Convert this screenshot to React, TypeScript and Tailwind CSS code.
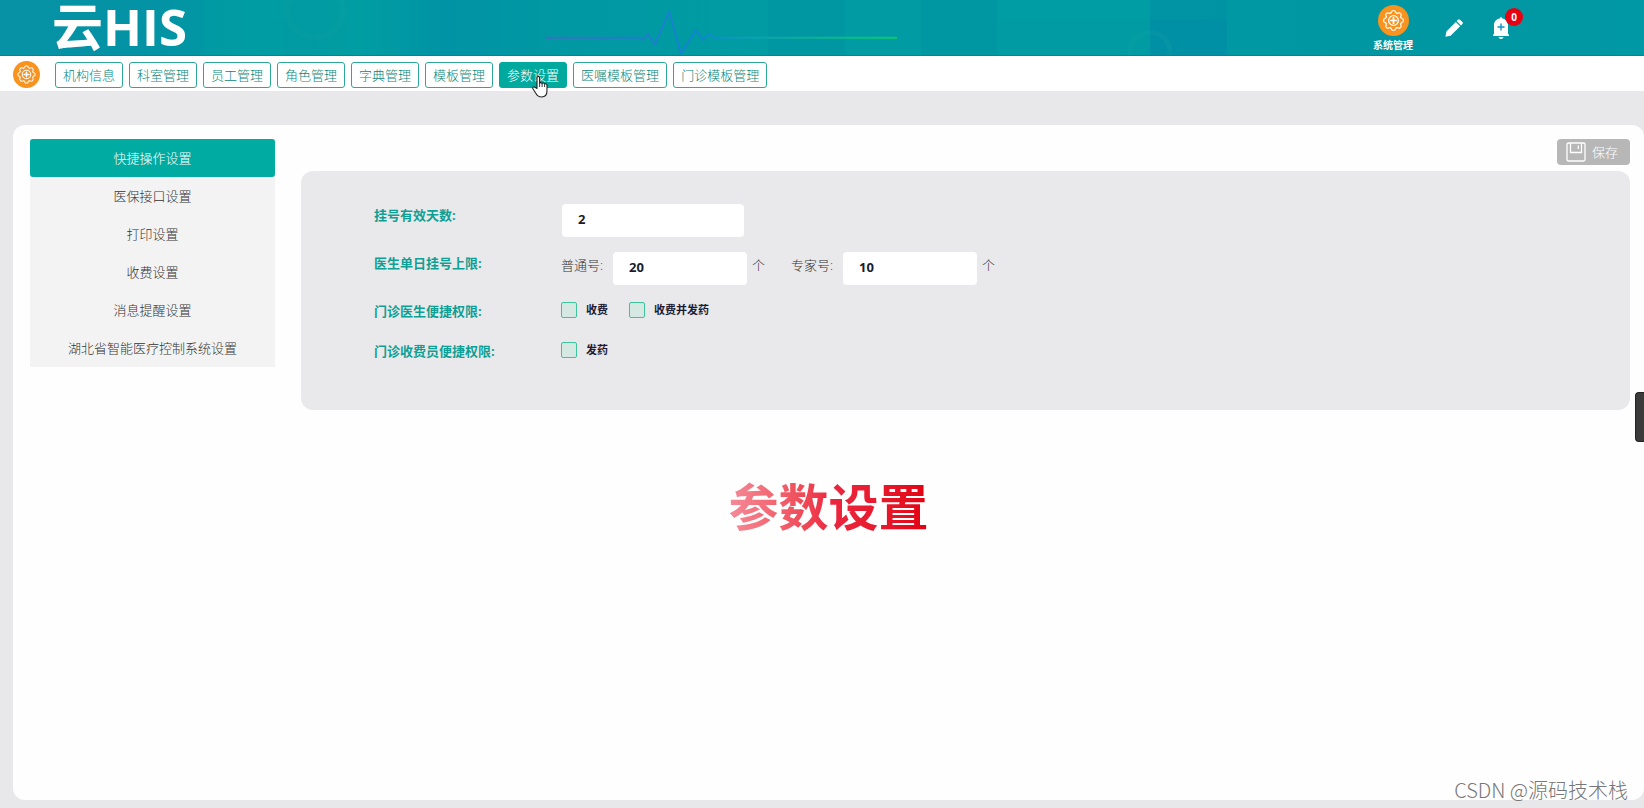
import { useState } from "react";
import type { ReactNode } from "react";

const modules = [
  "机构信息",
  "科室管理",
  "员工管理",
  "角色管理",
  "字典管理",
  "模板管理",
  "参数设置",
  "医嘱模板管理",
  "门诊模板管理",
];

const sections = [
  "快捷操作设置",
  "医保接口设置",
  "打印设置",
  "收费设置",
  "消息提醒设置",
  "湖北省智能医疗控制系统设置",
];

export default function App() {
  const [section, setSection] = useState(sections[0]);

  return (
    <div className="relative flex min-h-screen flex-col bg-[#e8e8ea] font-['Open_Sans','Noto_Sans_CJK_SC',sans-serif] text-[13px] leading-5 font-light text-[#333]">
      <Header />
      <ModuleBar />

      <main className="relative mt-[34px] mb-2 ml-[13px] flex flex-1 items-start gap-[26px] rounded-xl bg-[#fefefe] px-[14px] pt-[14px] pl-[17px]">
        <nav className="w-[245px] shrink-0 bg-[#f3f3f3]">
          {sections.map((name) => (
            <button
              key={name}
              type="button"
              onClick={() => setSection(name)}
              className={
                name === section
                  ? "block h-[38px] w-full rounded-[3px] bg-[#00aca2] text-white"
                  : "block h-[38px] w-full"
              }
            >
              {name}
            </button>
          ))}
        </nav>

        <section className="flex min-w-0 flex-1 flex-col">
          <button
            type="button"
            className="flex h-[26px] items-center gap-[6px] self-end rounded bg-[#b7b7b7] pr-3 pl-[9px] text-white"
          >
            <SaveIcon />
            保存
          </button>
          <QuickSettings />
        </section>

        <h1 className="pointer-events-none absolute inset-x-0 top-[346px] text-center text-[50px] leading-[72px] font-bold">
          <span className="bg-linear-to-r from-[#f48a98] via-[#ec2740] to-[#e2000f] bg-clip-text text-transparent">
            参数设置
          </span>
        </h1>
      </main>

      <div className="absolute top-[392px] right-0 h-[50px] w-[9px] rounded-l-sm border border-r-0 border-[#222] bg-[#3b3b3b]" />
      <p className="pointer-events-none absolute right-4 bottom-1 font-['Noto_Sans_CJK_SC',sans-serif] text-[20px] leading-7 text-[#777]">
        CSDN @源码技术栈
      </p>
    </div>
  );
}

const Header = () => (
  <header className="relative flex h-14 items-center justify-between border-b border-[#0a8389] bg-[#0099a2] pr-[135px] pl-[52px] text-white">
    <HeaderArt />
    <p className="relative pb-1 text-[51px] leading-[52px] font-bold whitespace-nowrap">
      云HIS
    </p>

    <div className="relative flex items-center">
      <a
        href="#system"
        className="flex flex-col items-center gap-px pt-[2px] text-[10px] leading-4 font-bold"
      >
        <GearBadge className="size-[31px]" />
        系统管理
      </a>
      <button type="button" aria-label="编辑" className="ml-8">
        <PencilIcon />
      </button>
      <button type="button" aria-label="消息" className="relative ml-[30px]">
        <BellIcon />
        <span className="absolute -top-[9px] left-3 flex size-[18px] items-center justify-center rounded-full bg-[#e60012] text-[10px] font-bold">
          0
        </span>
      </button>
    </div>
  </header>
);

const ModuleBar = () => (
  <nav className="flex h-[35px] items-center gap-[6px] bg-white pt-[2px] pl-[13px]">
    <GearBadge className="mr-[9px] size-[27px]" />
    {modules.map((name) => (
      <a
        key={name}
        href="#module"
        className={
          name === "参数设置"
            ? "relative flex h-[26px] items-center rounded-[3px] border border-[#00a99d] bg-[#00a99d] px-[7px] text-white"
            : "flex h-[26px] items-center rounded-[3px] border border-[#2ba79c] px-[7px] text-[#06877b]"
        }
      >
        {name}
        {name === "参数设置" && <HandCursor />}
      </a>
    ))}
  </nav>
);

const QuickSettings = () => (
  <form className="mt-[6px] flex flex-col gap-[15px] rounded-xl bg-[#e9e9eb] pt-[33px] pb-[45px] pl-[73px]">
    <Row label="挂号有效天数:">
      <input
        aria-label="挂号有效天数"
        defaultValue="2"
        className="ml-px h-[33px] w-[182px] rounded bg-white px-4 pb-[3px] font-bold text-[#1b1b2b]"
      />
    </Row>
    <Row label="医生单日挂号上限:">
      <LimitField label="普通号:" value="20" />
      <LimitField label="专家号:" value="10" />
    </Row>
    <Row label="门诊医生便捷权限:">
      <CheckField label="收费" />
      <CheckField label="收费并发药" />
    </Row>
    <Row label="门诊收费员便捷权限:">
      <CheckField label="发药" />
    </Row>
  </form>
);

const Row = ({ label, children }: { label: string; children: ReactNode }) => (
  <div className="flex min-h-[25px] items-start">
    <span className="w-[187px] shrink-0 pt-px font-bold text-[#0f9f94]">
      {label}
    </span>
    {children}
  </div>
);

const LimitField = ({ label, value }: { label: string; value: string }) => (
  <label className="mr-[26px] flex items-start">
    <span className="w-[52px] pt-[3px]">{label}</span>
    <input
      defaultValue={value}
      className="mr-[5px] h-[33px] w-[134px] rounded bg-white px-4 pb-[3px] font-bold text-[#1b1b2b]"
    />
    <span className="pt-[3px]">个</span>
  </label>
);

const CheckField = ({ label }: { label: string }) => (
  <label className="mr-[21px] flex items-center gap-[9px] text-[11px] font-bold text-[#1b1b33]">
    <input
      type="checkbox"
      className="size-4 appearance-none rounded-xs border border-[#3cc49c] bg-[#d5e8e2] checked:bg-[#3cc49c]"
    />
    {label}
  </label>
);

const HeaderArt = () => (
  <svg
    className="absolute top-0 left-0 h-[55px] w-full"
    viewBox="0 0 1644 56"
    preserveAspectRatio="none"
    fill="none"
    aria-hidden="true"
  >
    <defs>
      <linearGradient id="sky" x1="0" x2="1644" gradientUnits="userSpaceOnUse">
        <stop offset="0" stopColor="#0892a6" />
        <stop offset=".08" stopColor="#0492a5" />
        <stop offset=".15" stopColor="#0099a2" />
        <stop offset=".22" stopColor="#009da3" />
        <stop offset=".27" stopColor="#0093a5" />
        <stop offset=".35" stopColor="#0099a3" />
        <stop offset=".45" stopColor="#009ba3" />
        <stop offset=".7" stopColor="#009ba3" />
        <stop offset=".8" stopColor="#0097a3" />
        <stop offset="1" stopColor="#0098a4" />
      </linearGradient>
      <linearGradient id="pulse" x1="545" x2="897" gradientUnits="userSpaceOnUse">
        <stop offset="0" stopColor="#3b70c0" />
        <stop offset=".45" stopColor="#0d86d2" />
        <stop offset=".55" stopColor="#0d9cb8" />
        <stop offset="1" stopColor="#0acb6e" />
      </linearGradient>
    </defs>
    <path fill="url(#sky)" d="M0 0h1644v56H0z" />
    <path fill="#0091a3" opacity=".4" d="M768 0h77v56h-77zM921 0h76v56h-76z" />
    <path fill="#008da5" opacity=".5" d="M1150 0h77v20h-77z" />
    <path fill="#008da5" opacity=".8" d="M1150 20h77v36h-77z" />
    <path fill="#00a0a4" opacity=".4" d="M997 0h153v20H997zM204 0h80v56h-80z" />
    <circle cx="1150" cy="53" r="20" stroke="#1aa6ab" strokeWidth="5" opacity=".2" />
    <circle cx="315" cy="10" r="28" stroke="#1aa6ab" strokeWidth="6" opacity=".15" />
    <path
      stroke="url(#pulse)"
      strokeWidth="2"
      strokeLinejoin="round"
      d="M545 38.500h94l4 2 5-6 7 11 14-34 12 43 15-24 7 10 6-6 5 4h183"
    />
  </svg>
);

// one lobe of the cog, repeated every 45 degrees
const teeth = [0, 45, 90, 135, 180, 225, 270, 315];

const GearBadge = ({ className }: { className: string }) => (
  <svg viewBox="0 0 32 32" className={className} fill="none" aria-hidden="true">
    <circle cx="16" cy="16" r="16" fill="#f7931e" />
    <g stroke="#fff" strokeWidth="1.2" strokeLinecap="round" strokeLinejoin="round">
      {teeth.map((angle) => (
        <path
          key={angle}
          transform={`rotate(${angle} 16 16)`}
          d="M12.9 8.4c.9-.2 1.1-.7 1.3-1.7.1-.6.4-.8.9-.8h1.8c.5 0 .8.2.9.8.2 1 .4 1.5 1.3 1.7"
        />
      ))}
      <circle cx="16" cy="16" r="5" strokeWidth="1.3" />
      <path strokeWidth="1.8" d="M16 13.2v5.6M13.2 16h5.6" />
    </g>
  </svg>
);

const PencilIcon = () => (
  <svg width="18" height="18" viewBox="0 0 18 18" fill="#fff" aria-hidden="true">
    <path d="M13 .7q1-1 2 0l2.4 2.4q1 1 0 2L16 6.5 11.6 2.1zM10.8 2.9l4.4 4.4L5.6 16.7.4 17.8l1-5.3z" />
  </svg>
);

const BellIcon = () => (
  <svg width="16" height="22" viewBox="0 0 16 22" aria-hidden="true">
    <path
      fill="#fff"
      d="M6.8 1.5a1.2 1.2 0 0 1 2.4 0C12.8 2.2 15 4.8 15 8v8.8l1 1.2v1H0v-1l1-1.2V8c0-3.2 2.2-5.800 5.800-6.500zM5.500 20h5c-.3 1.300-1.300 2-2.500 2s-2.200-.7-2.500-2z"
    />
    <path stroke="#0d93c4" strokeWidth="1.4" d="M8 6.500v7M4.500 10h7" />
  </svg>
);

const SaveIcon = () => (
  <svg
    width="20"
    height="20"
    viewBox="0 0 20 20"
    fill="none"
    stroke="#fff"
    strokeWidth="1.3"
    strokeLinejoin="round"
    aria-hidden="true"
  >
    <rect x="1" y="1" width="18" height="18" rx="1.5" />
    <path d="M4.500 1v9.500h11V1M12.300 3.500v3.500" />
  </svg>
);

const HandCursor = () => (
  <svg
    className="pointer-events-none absolute top-[13px] left-8"
    width="16"
    height="22"
    viewBox="0 0 16 22"
    aria-hidden="true"
  >
    <path
      fill="#fff"
      stroke="#222"
      strokeWidth="1.1"
      strokeLinejoin="round"
      d="M5 12.500V2c0-2 2.600-2 2.600 0v5.500c.2-1.300 2.400-1.200 2.500.2.300-1.100 2.400-1 2.500.6.300-1 2.400-.8 2.400 1v5.200c0 3.500-1.500 6.500-5.500 6.500-3 0-4.300-1.300-5.500-3.500L.9 12.800c-.8-1.500 1-2.500 2.100-1.500z"
    />
    <path stroke="#222" strokeWidth=".9" d="M7.600 7.500v3.500M10.100 8v3M12.600 8.500V11" />
  </svg>
);
